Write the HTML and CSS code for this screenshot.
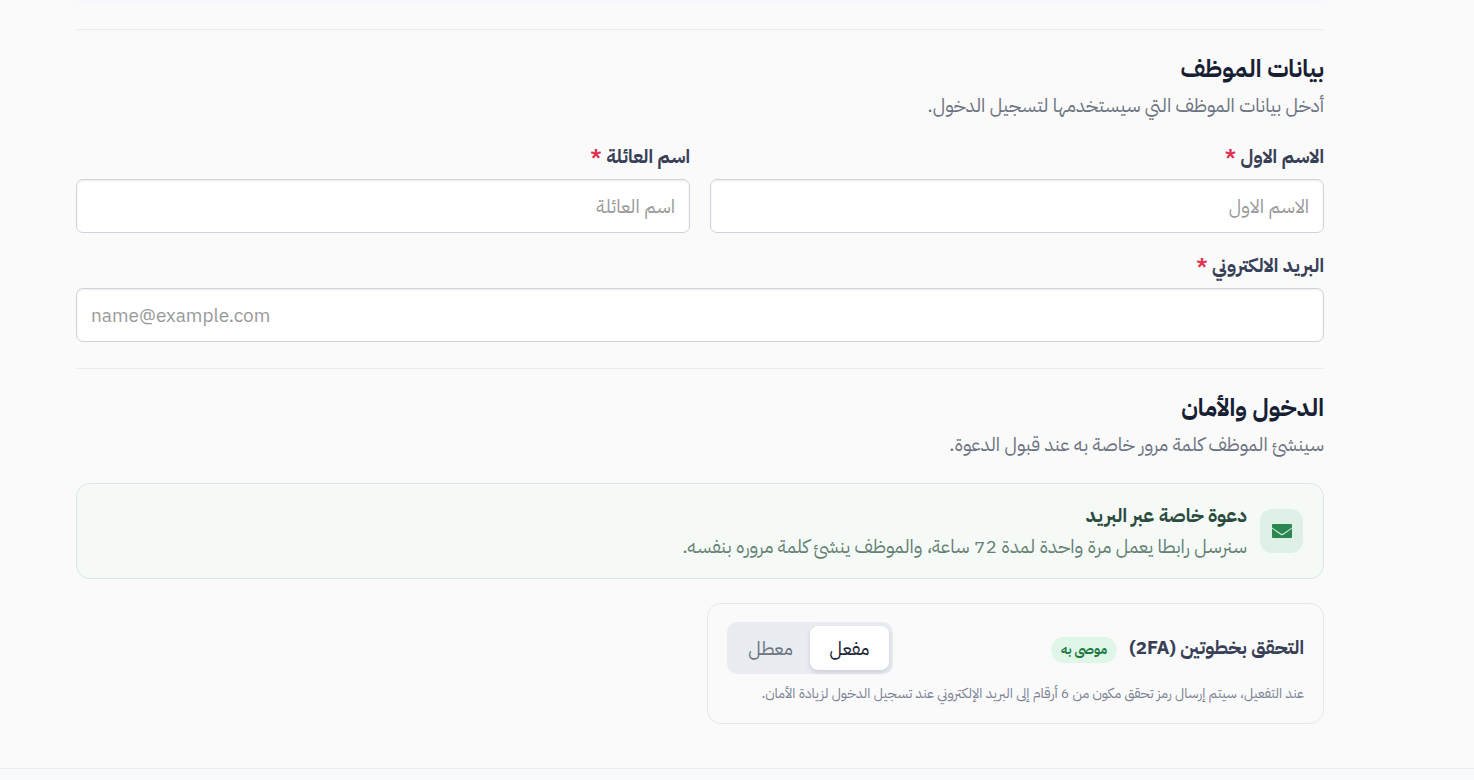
FILE: index.html
```html
<!DOCTYPE html>
<html lang="ar" dir="rtl">
<head>
    <meta charset="UTF-8">
    <meta name="viewport" content="width=device-width, initial-scale=1.0">
    <title>إضافة موظف</title>
    <link rel="stylesheet" href="styles.css">
</head>
<body>
    <main class="page">
        <div class="prev-panel"></div>

        <section class="form-section">
            <h2 class="section-title">بيانات الموظف</h2>
            <p class="section-desc">أدخل بيانات الموظف التي سيستخدمها لتسجيل الدخول.</p>

            <form class="fields">
                <div class="field">
                    <label for="first-name">الاسم الاول <span class="required">*</span></label>
                    <input type="text" id="first-name" placeholder="الاسم الاول">
                </div>
                <div class="field">
                    <label for="last-name">اسم العائلة <span class="required">*</span></label>
                    <input type="text" id="last-name" placeholder="اسم العائلة">
                </div>
                <div class="field field-wide">
                    <label for="email">البريد الالكتروني <span class="required">*</span></label>
                    <input type="email" id="email" dir="ltr" placeholder="name@example.com">
                </div>
            </form>
        </section>

        <section class="form-section">
            <h2 class="section-title">الدخول والأمان</h2>
            <p class="section-desc">سينشئ الموظف كلمة مرور خاصة به عند قبول الدعوة.</p>

            <div class="invite">
                <div class="invite-icon">
                    <svg width="20" height="14" viewBox="0 0 20 14" aria-hidden="true">
                        <path fill="#2a8752" d="M1 0h18a1 1 0 0 1 1 1v2.4L11.2 9.6a2.1 2.1 0 0 1-2.4 0L0 3.4V1a1 1 0 0 1 1-1z"/>
                        <path fill="#2a8752" d="M0 4.6l8.2 5.9a3.1 3.1 0 0 0 3.6 0L20 4.6V13a1 1 0 0 1-1 1H1a1 1 0 0 1-1-1z"/>
                    </svg>
                </div>
                <div class="invite-text">
                    <h3>دعوة خاصة عبر البريد</h3>
                    <p>سنرسل رابطا يعمل مرة واحدة لمدة 72 ساعة، والموظف ينشئ كلمة مروره بنفسه.</p>
                </div>
            </div>

            <div class="options">
                <div class="option-card">
                    <div class="option-head">
                        <div class="option-name">
                            <h3>التحقق بخطوتين (2FA)</h3>
                            <span class="badge">موصى به</span>
                        </div>
                        <div class="toggle" role="group" aria-label="التحقق بخطوتين">
                            <button type="button" class="active" aria-pressed="true">مفعل</button>
                            <button type="button" aria-pressed="false">معطل</button>
                        </div>
                    </div>
                    <p class="option-note">عند التفعيل، سيتم إرسال رمز تحقق مكون من 6 أرقام إلى البريد الإلكتروني عند تسجيل الدخول لزيادة الأمان.</p>
                </div>
            </div>
        </section>
    </main>
    <footer class="footer"></footer>
</body>
</html>
```

FILE: styles.css
```css
* {
    box-sizing: border-box;
}
body {
    margin: 0;
    min-height: 100vh;
    display: flex;
    flex-direction: column;
    background: #fafafa;
    color: #172033;
    font-family: "IBM Plex Sans Arabic", "Noto Sans Arabic", "Noto Sans", "DejaVu Sans", sans-serif;
    font-size: 19px;
}
h2, h3, p {
    margin: 0;
}
button, input {
    font-family: inherit;
    font-size: 19px;
}
.page {
    padding: 0 150px 44px 76px;
}
.prev-panel {
    height: 3px;
    background: #f7f8fd;
    border-radius: 0 0 8px 8px;
}
.form-section {
    margin-top: 26px;
    padding-top: 24px;
    border-top: 1px solid #e9eaed;
}
.section-title {
    font-size: 24px;
    line-height: 30px;
    font-weight: 700;
}
.section-desc {
    margin: 8px 0 24px;
    line-height: 28px;
    color: #6b7280;
}
.fields {
    display: grid;
    grid-template-columns: 1fr 1fr;
    gap: 20px;
}
.field {
    display: flex;
    flex-direction: column;
    gap: 9px;
}
.field-wide {
    grid-column: 1 / -1;
}
.field label {
    line-height: 26px;
    font-weight: 700;
    color: #374056;
}
.required {
    color: #e0304f;
}
.field input {
    width: 100%;
    height: 54px;
    padding: 0 14px;
    border: 1px solid #d1d3dc;
    border-radius: 7px;
    background: #fff;
    box-shadow: inset 0 1px 2px rgba(0,0,0,0.08);
}
.field input::placeholder {
    color: #999;
    opacity: 1;
}
.invite {
    display: flex;
    align-items: center;
    gap: 13px;
    padding: 16px 20px;
    border: 1px solid #dbe7e1;
    border-radius: 14px;
    background: #f5faf7;
}
.invite-icon {
    display: flex;
    align-items: center;
    justify-content: center;
    flex: none;
    width: 43px;
    height: 44px;
    border-radius: 12px;
    background: #dff0e6;
}
.invite-text h3 {
    font-size: 19px;
    line-height: 31px;
    font-weight: 700;
    color: #2b4c3e;
}
.invite-text p {
    line-height: 31px;
    color: #648073;
}
.options {
    display: grid;
    grid-template-columns: 1fr 1fr;
    gap: 14px;
    margin-top: 24px;
}
.option-card {
    padding: 18px 19px;
    border: 1px solid #e5e7ec;
    border-radius: 14px;
}
.option-head {
    display: flex;
    align-items: center;
    justify-content: space-between;
}
.option-name {
    display: flex;
    align-items: baseline;
    gap: 12px;
}
.option-name h3 {
    font-size: 19px;
    line-height: 28px;
    font-weight: 700;
    color: #374056;
}
.badge {
    padding: 0 10px;
    border-radius: 13px;
    background: #e0f6e8;
    color: #1b7a43;
    font-size: 13px;
    line-height: 26px;
    font-weight: 700;
}
.toggle {
    display: flex;
    padding: 4px;
    border-radius: 10px;
    background: #e9ecf1;
}
.toggle button {
    width: 79px;
    height: 44px;
    padding: 0;
    border: none;
    border-radius: 8px;
    background: transparent;
    color: #6b7480;
    cursor: pointer;
}
.toggle .active {
    background: #fff;
    color: #172033;
    box-shadow: 0 2px 5px rgba(15,23,42,0.14);
}
.option-note {
    margin-top: 8px;
    font-size: 14px;
    line-height: 23px;
    color: #7a8294;
}
.footer {
    flex: 1;
    min-height: 11px;
    border-top: 1px solid #ebedf0;
    background: #f9fafc;
}
```
